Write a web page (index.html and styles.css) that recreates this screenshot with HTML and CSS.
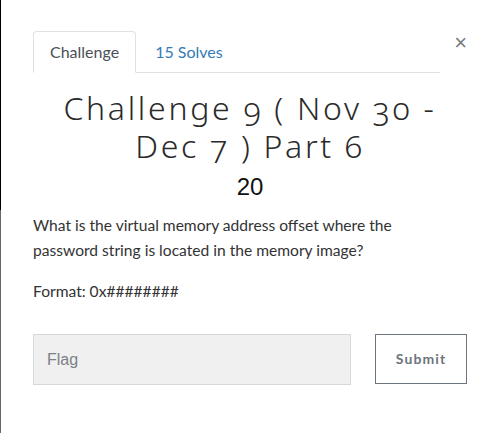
FILE: index.html
```html
<!DOCTYPE html>
<html>
<head>
<meta charset="utf-8">
<link rel="stylesheet" href="styles.css">
</head>
<body>
<div class="edge"><div class="edge-top"></div><div class="edge-bottom"></div></div>
<div class="modal">
  <div class="header">
    <ul class="tabs">
      <li class="tab active">Challenge</li>
      <li class="tab link">15 Solves</li>
    </ul>
    <div class="close">×</div>
  </div>
  <h2 class="title">Challenge 9 ( Nov 30 -<br>Dec 7 ) Part 6</h2>
  <h3 class="value">20</h3>
  <div class="desc">
    <p>What is the virtual memory address offset where the password string is located in the memory image?</p>
    <p>Format: 0x########</p>
  </div>
  <div class="form">
    <div class="input">Flag</div>
    <div class="button">Submit</div>
  </div>
</div>
</body>
</html>
```
FILE: styles.css
```css
html, body {
  margin: 0;
  padding: 0;
  background: #fff;
  height: 100%;
}
body {
  position: relative;
  overflow: hidden;
  font-family: Lato, "Liberation Sans", sans-serif;
}
.edge {
  position: absolute;
  left: 0;
  top: 0;
  bottom: 0;
  width: 1px;
  display: flex;
  flex-direction: column;
}
.edge-top { height: 210px; background: #000; }
.edge-bottom { flex: 1; background: #666; }
.modal {
  padding: 31px 30px 0 33px;
}
.header {
  display: flex;
  align-items: flex-start;
}
.tabs {
  list-style: none;
  margin: 0;
  padding: 0;
  display: flex;
  flex: 1;
  border-bottom: 1px solid #dee2e6;
  margin-right: 14px;
}
.tab {
  font-size: 16px;
  padding: 0 16px;
  height: 40px;
  line-height: 40px;
  margin-bottom: -1px;
  border: 1px solid transparent;
  border-radius: 4px 4px 0 0;
}
.tab.active {
  color: #495057;
  border-color: #dee2e6 #dee2e6 #fff;
  background: #fff;
}
.tab.link {
  color: #337ab7;
  padding-left: 18px;
}
.close {
  font-family: "Liberation Sans", Arial, sans-serif;
  font-size: 22px;
  color: #7a7a7a;
  line-height: 22px;
  margin-top: 1px;
}
.title {
  font-family: "Noto Sans", sans-serif;
  font-weight: 300;
  font-variant-numeric: oldstyle-nums;
  font-size: 32px;
  line-height: 38.4px;
  letter-spacing: 2.7px;
  color: #2a2a2a;
  text-align: center;
  margin: 16px 0 0;
}
.value {
  font-family: "Liberation Sans", Arial, sans-serif;
  font-weight: 400;
  font-size: 24px;
  line-height: 28px;
  color: #111;
  text-align: center;
  margin: 7px 0 0;
}
.desc {
  margin-top: 12px;
  padding-right: 14px;
  color: #333;
  font-size: 15.6px;
  line-height: 25px;
}
.desc p {
  margin: 0 0 16px;
}
.form {
  display: flex;
  align-items: flex-start;
  margin-top: 30px;
}
.input {
  height: 49px;
  background: #f0f0f0;
  border: 1px solid #d3d8dc;
  font-family: "Liberation Sans", Arial, sans-serif;
  font-size: 16px;
  color: #7b8186;
  line-height: 49px;
  padding-left: 13px;
  width: 303px;
}
.button {
  margin-left: 24px;
  width: 90px;
  height: 48px;
  border: 1px solid #6c757d;
  color: #6c757d;
  font-weight: 700;
  font-size: 14px;
  letter-spacing: 1.1px;
  display: flex;
  align-items: center;
  justify-content: center;
}
```
